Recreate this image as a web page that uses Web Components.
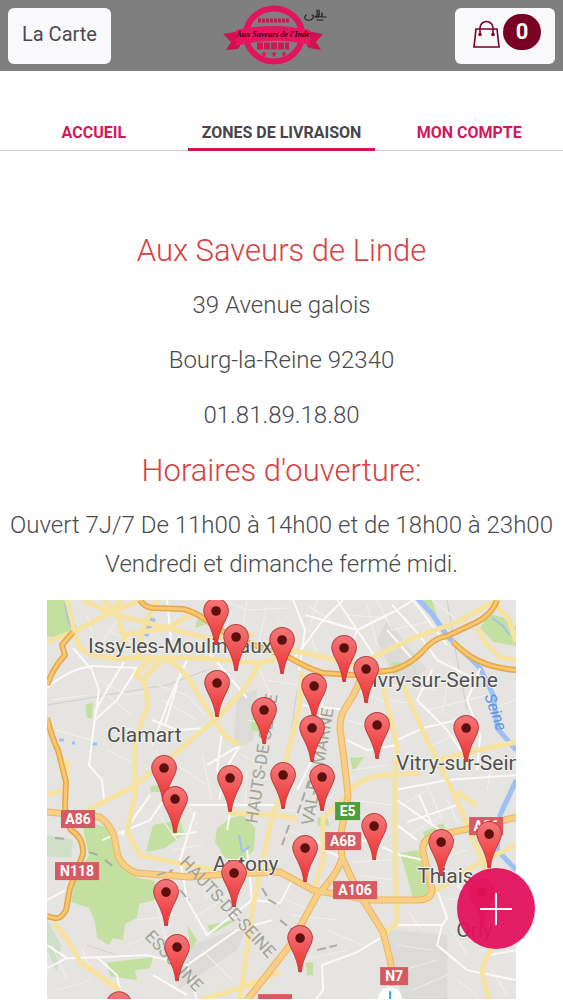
<!DOCTYPE html>
<html lang="fr">
<head>
<meta charset="utf-8">
<meta name="viewport" content="width=device-width, initial-scale=1">
<title>Aux Saveurs de Linde - Zones de livraison</title>
<style>
  body {
    margin: 0;
    background: #fff;
    color: #4a4a4c;
    font-family: Roboto, "Liberation Sans", sans-serif;
  }
</style>
</head>
<body>
<site-header>
  <brand-logo></brand-logo>
</site-header>

<nav-tabs>
  <nav-tab href="#accueil">ACCUEIL</nav-tab>
  <nav-tab href="#zones" active>ZONES DE LIVRAISON</nav-tab>
  <nav-tab href="#compte">MON COMPTE</nav-tab>
</nav-tabs>

<main>
  <shop-info>
    <h2>Aux Saveurs de Linde</h2>
    <p>39 Avenue galois</p>
    <p>Bourg-la-Reine 92340</p>
    <p>01.81.89.18.80</p>
    <h2>Horaires d'ouverture:</h2>
    <p>Ouvert 7J/7 De 11h00 à 14h00 et de 18h00 à 23h00<br>Vendredi et dimanche fermé midi.</p>
    <delivery-map slot="map"></delivery-map>
  </shop-info>
</main>

<add-button></add-button>

<script>
class SiteHeader extends HTMLElement {
  connectedCallback() {
    this.attachShadow({ mode: 'open' });
    this.shadowRoot.innerHTML = `
      <style>
        :host { display: block; }
        header {
          display: grid;
          grid-template-columns: 1fr auto 1fr;
          align-items: center;
          box-sizing: border-box;
          height: 71px;
          padding: 0 8px;
          background: #807f80;
        }
        button {
          display: flex;
          align-items: center;
          height: 56px;
          border: 0;
          border-radius: 6px;
          background: #f9f8fb;
          color: #4a4a4c;
          font: inherit;
          font-size: 20px;
          cursor: pointer;
        }
        .menu { justify-self: start; padding: 0 14px 4px; }
        .cart { justify-self: end; padding: 0 14px 8px 18px; gap: 3px; }
        .count {
          width: 38px;
          border-radius: 18px;
          background: #780024;
          color: #fff;
          font-size: 22px;
          font-weight: 700;
          line-height: 36px;
          text-align: center;
        }
      </style>
      <header>
        <button class="menu" type="button">La Carte</button>
        <slot></slot>
        <button class="cart" type="button" aria-label="Panier">
          <svg width="27" height="36" viewBox="0 -5 27 36" fill="none" stroke="#780024" stroke-width="1.6" aria-hidden="true">
            <path d="M3 10h21l2 18H1z"/>
            <path d="M7 15V9a6.500 6.500 0 0 1 13 0v6"/>
            <circle cx="7" cy="15.500" r="1.800" fill="#780024" stroke="none"/>
            <circle cx="20" cy="15.500" r="1.800" fill="#780024" stroke="none"/>
          </svg>
          <span class="count">0</span>
        </button>
      </header>
    `;
  }
}
customElements.define('site-header', SiteHeader);

class BrandLogo extends HTMLElement {
  connectedCallback() {
    this.attachShadow({ mode: 'open' });
    this.shadowRoot.innerHTML = `
      <style>
        :host { display: block; padding: 0 14px 2px 0; }
        svg { display: block; }
      </style>
      <svg width="104" height="62" viewBox="0 0 104 62" role="img" aria-label="Aux Saveurs de l'Inde">
        <ellipse cx="51" cy="31" rx="28" ry="26.500" fill="none" stroke="#e4135d" stroke-width="6"/>
        <path d="M35 16.500h32" stroke="#c01a55" stroke-width="4" stroke-dasharray="3 1"/>
        <path d="M0 30 17 27v15l-2 3L3 46l5-8zM100 30 84 27v15l2 2 12 2-5-8z" fill="#d0114f"/>
        <path d="M13 26Q50 18 87 26v15Q50 32 13 42z" fill="#e8155f"/>
        <path d="M34 42h32" stroke="#d31455" stroke-width="7" stroke-dasharray="6 1"/>
        <path d="m41 47 1 2 2 0-2 2 1 2-2-1-2 1 1-2-2-2h2zm10 0 1 2h2l-2 2 1 2-2-1-2 1 1-2-2-2h2zm10 0 1 2h2l-2 2 1 2-2-1-2 1 1-2-2-2h2z" fill="#e4135d"/>
        <text x="50" y="33" text-anchor="middle" fill="#2a0614" font-family="Liberation Serif, serif" font-style="italic" font-weight="700" font-size="8">Aux Saveurs de l'Inde</text>
        <path d="M83 11q-3 4 1 5 4 1 6-2 1-3-1-3m3 2q3 0 2-7m-1 7q4 1 3-7m0 7q4 0 3-4m0 4h4m-9 3h6" fill="none" stroke="#1c1c20" stroke-width="1.200" stroke-linecap="round"/>
      </svg>
    `;
  }
}
customElements.define('brand-logo', BrandLogo);

class NavTabs extends HTMLElement {
  connectedCallback() {
    this.attachShadow({ mode: 'open' });
    this.shadowRoot.innerHTML = `
      <style>
        :host { display: block; padding-top: 42px; }
        nav {
          display: grid;
          grid-template-columns: repeat(3, 1fr);
          box-shadow: inset 0 -1px #d5cfd3;
        }
      </style>
      <nav><slot></slot></nav>
    `;
  }
}
customElements.define('nav-tabs', NavTabs);

class NavTab extends HTMLElement {
  connectedCallback() {
    const active = this.hasAttribute('active');
    this.attachShadow({ mode: 'open' });
    this.shadowRoot.innerHTML = `
      <style>
        :host { display: block; }
        a {
          display: block;
          height: 35px;
          border-bottom: 3px solid transparent;
          color: #d3175a;
          font-size: 16px;
          font-weight: 700;
          line-height: 40px;
          text-align: center;
          text-decoration: none;
          white-space: nowrap;
        }
        a.active { border-color: #cb1556; color: #49454a; }
      </style>
      <a href="${this.getAttribute('href')}" class="${active ? 'active' : ''}"><slot></slot></a>
    `;
  }
}
customElements.define('nav-tab', NavTab);

class ShopInfo extends HTMLElement {
  connectedCallback() {
    this.attachShadow({ mode: 'open' });
    this.shadowRoot.innerHTML = `
      <style>
        :host {
          display: block;
          padding-top: 80px;
          text-align: center;
          font-weight: 300;
        }
        ::slotted(h2), ::slotted(p) { margin: 0 0 16px; line-height: 39px; }
        ::slotted(h2) { color: #d9403f; font-size: 31px; font-weight: 300; }
        ::slotted(p) { font-size: 24px; }
        .map {
          display: grid;
          grid-template-columns: 1fr 10fr 1fr;
        }
        .map slot { display: block; grid-column: 2; }
      </style>
      <slot></slot>
      <div class="map"><slot name="map"></slot></div>
    `;
  }
}
customElements.define('shop-info', ShopInfo);

// centre of each pin's head, in map units
const PINS = [
  [169, 11], [235, 40], [189, 37], [297, 48], [319, 69], [170, 83], [267, 86],
  [217, 110], [330, 125], [265, 128], [419, 128], [117, 168], [236, 175],
  [275, 177], [183, 178], [128, 199], [327, 226], [442, 234], [394, 242],
  [258, 248], [187, 273], [435, 292], [119, 292], [253, 338], [130, 347], [72, 404]
];

// x, y, width, label, colour
const SHIELDS = [
  [14, 210, 34, 'A86', '#d65a62'],
  [8, 262, 44, 'N118', '#d65a62'],
  [288, 202, 25, 'E5', '#4f9c3c'],
  [278, 232, 36, 'A6B', '#d65a62'],
  [286, 281, 44, 'A106', '#d65a62'],
  [422, 217, 34, 'A86', '#d65a62'],
  [333, 367, 28, 'N7', '#d65a62']
];

const MOTORWAYS = `
  M26 32 15 45 18 55Q6 68 0 85M0 118Q5 138 11 150L19 182 18 205Q18 223 24 230 37 238 36 254L23 288 19 310Q14 319 8 318L0 316
  M93 0Q97 7 106 8L136 9Q150 12 170 28 190 40 210 46L243 58Q260 68 276 73L306 75 346 70Q362 65 375 52 386 38 400 36L430 22Q445 14 450 0
  M406 42Q420 56 432 61 446 68 469 70`;

const TRUNKS = `
  M0 212 53 217Q63 224 67 236L71 256Q76 268 90 273L143 277 180 274 233 272 266 290 323 300H370Q384 300 385 290L376 252Q374 240 386 236L420 229 469 217
  M316 70Q312 88 300 105 292 116 293 130L297 160 301 195 293 238 295 258Q290 275 270 295L243 345 200 400
  M295 258 311 292 336 332 343 360 347 385`;

const YELLOW = `
  M0 42 26 32 63 13 98-2M20 0 26 25 30 42Q34 52 46 55L70 59 90 58
  M36 0 63 13 120 28 160 38 206 35M56 0 70 15 80 48M110 0 96 28 90 58M63 13 75 0M75 35 120 28 150 12
  M96 79Q85 78 92 70L103 61Q120 57 130 66 142 76 152 96L166 118 178 136 193 145
  M113 62 97 78 101 105 93 125 88 145V195L80 232 93 255 130 263 170 270
  M213 63 195 92 170 118 126 155 86 187 50 205 30 216M90 58H150L213 63 240 56
  M233 48 276 57 310 65 366 38 410 22 446 2M430 28 440 45 452 57 469 60M446 2 462 20 469 42
  M255 72 253 105 240 155 233 200 226 212 206 305 193 400
  M336 88 350 145 348 172M356 85 376 132 406 192 433 255 445 290
  M469 142 423 152 390 160M301 192Q315 178 330 176L373 173
  M348 172V262L350 322 333 338M301 195 276 218V262L266 290M250 218 233 216 180 212
  M386 292 433 262 469 245M450 340Q436 360 435 372L442 400M410 192 430 205
  M6 322Q22 338 33 362L70 388 74 400M153 400 193 388 233 372M0 195 18 190 20 160`;

const STREETS = `
  M26 48 45 70 52 90 47 125 42 165 55 180 57 200M0 88Q20 70 45 66L90 68M90 68 70 100 48 120
  M77 62 60 90 48 112M120 0 124 40M140 60 122 100 105 145M105 120 130 130 160 128M130 85 118 125
  M175 130 170 170 185 200 180 230M193 145 178 170 172 200M103 195 75 235M140 205H227M148 212 133 260 140 300 160 335
  M193 145 160 165M153 42 170 62 200 98M246 0 258 30 252 70M258 15 310 30 350 10 366 0M310 30 330 60M246 60 276 20 296 0
  M290 0 310 30 300 60M340 30 366 60M366 0 400 45M345 5 372 35 390 60 430 80M433 68 420 100 433 135 430 170
  M385 70 370 100 400 130 420 160M350 140 376 128 410 120M300 140 320 150 350 145M276 90 270 150 250 190M253 105 300 110
  M348 190 400 180 469 175M350 200 400 235M372 195 385 225M360 222 410 205M370 240 350 225M297 245 320 240 353 255 376 260
  M350 325H395L400 318 390 290M395 325 390 345 420 370 469 380M333 338 310 352 275 365 276 390 268 400M295 258 278 250 270 240
  M0 368 20 358 50 357 100 355 140 365 190 330 225 320M50 357 70 375 74 395M20 358 0 345M140 365 150 400M160 335 205 300 233 303
  M233 303 245 280M205 300 200 250M106 375 140 395M55 240 103 220 120 195M125 235 150 232M0 300 18 290
  M433 335 430 300 410 285M441 355 469 350M469 310 440 318`;

const LANES = `
  M52 80 80 95 100 92M60 95 85 115M55 130 90 128M60 150 90 165M5 100 40 95M8 130 45 140M110 85 140 95 158 115M115 100 150 120
  M130 15 122 30M70 20 50 50M60 30 85 42M40 15 50 50M185 10 176 35 190 58M200 0 195 30M220 5 210 50M175 0 200 10 240 8
  M260 5 290 25M270 0 262 30 270 55M320 5 330 45M300 15 340 18M330 0 345 30 380 22M385 0 410 20M345 85 390 90M340 100 375 105
  M300 120 335 130M310 90 345 105M380 110 440 95M385 145 420 130M360 150 380 170M400 85 395 115M440 110 469 100M445 160 440 190
  M110 150 115 190M130 165 160 185M135 190 150 225M155 155 165 200M195 155 215 165M200 170 198 205M185 215 210 210M215 180 245 175
  M240 210 270 212M240 230 270 240M305 170 340 165M305 200 345 205M310 215 340 225M355 205 380 190M362 235 395 215M380 185 395 220M400 200 412 225
  M305 262 345 260M310 275 345 280M390 260 420 250M395 270 425 280M400 300 430 295M360 310 375 330M350 345 385 350M355 370 390 360M365 390 400 375
  M405 330 420 355M445 330 469 335M445 370 460 395M410 380 430 395M240 300 262 310M245 315 290 320M255 360 300 350M280 330 315 345
  M5 345 20 380M10 390 45 380M35 350 45 370M80 345 120 330M90 320 130 315M110 305 120 345M155 350 185 380M165 300 195 290M150 315 175 300
  M125 250 155 245M112 215 130 240M150 260 160 300M180 310 220 345M400 60 425 85M230 20 246 35M210 65 230 110M220 80 250 85M200 120 230 125`;

class DeliveryMap extends HTMLElement {
  connectedCallback() {
    const shield = ([x, y, w, label, fill]) => `
      <rect x="${x}" y="${y}" width="${w}" height="18" fill="${fill}"/>
      <text x="${x + w / 2}" y="${y + 14}">${label}</text>`;
    const pin = ([x, y]) => `<use href="#pin" x="${x}" y="${y}"/>`;

    this.attachShadow({ mode: 'open' });
    this.shadowRoot.innerHTML = `
      <style>
        :host { display: block; }
        svg { display: block; width: 100%; height: auto; font-family: Roboto, "Liberation Sans", sans-serif; }
        path { stroke-linejoin: round; }
        .road { fill: none; }
        .town { fill: #50514f; font-size: 21px; font-weight: 400; stroke: #f4f3ef; stroke-width: 2px; paint-order: stroke; }
        .area { fill: #a2a196; font-size: 17px; font-weight: 400; }
        .shield { fill: #fff; font-size: 14px; font-weight: 700; text-anchor: middle; }
        .river { fill: #5c94e2; font-size: 16px; font-style: italic; font-weight: 400; }
      </style>
      <svg viewBox="0 0 469 399" role="img" aria-label="Carte des zones de livraison">
        <defs>
          <linearGradient id="red" x1="0" y1="0" x2="0" y2="1">
            <stop offset="0" stop-color="#f3787a"/>
            <stop offset="1" stop-color="#f0302f"/>
          </linearGradient>
          <g id="pin">
            <path d="M0-12.500a12.300 12.300 0 0 1 12.300 12.500C12.300 8 3 15 1.200 33.500H-1.200C-3 15-12.300 8-12.300 0A12.300 12.300 0 0 1 0-12.500z" fill="url(#red)" stroke="#b93f40"/>
            <circle r="4.800" fill="#5a100d"/>
          </g>
        </defs>
        <rect width="469" height="400" fill="#e5e4e1"/>

        <g fill="#dcdbd8">
          <path d="M190 95 210 90 206 140 186 150zM340 330 400 335 400 400H355zM145 345 200 325 190 350 130 390zM340 20 380 70 350 85 330 40z"/>
        </g>
        <g fill="#c3e0a1">
          <path d="M0 0H18L24 30 12 38 0 36zM38 105 46 102 45 118 40 118zM150 20 160 15 158 25 148 28z"/>
          <path d="M36 228 46 224 60 227 70 245 75 262 90 278 106 280 112 288 108 300 92 304 90 318 78 324 76 340 66 338 62 345 50 338 48 322 42 308 24 302 30 272 42 256z"/>
          <path d="M106 225 133 220 137 234 118 248 99 252zM168 242 170 228 184 218 196 215 208 228 207 250 196 262 178 258z"/>
          <path d="M60 362 80 360 106 357 103 368 88 370 90 380 63 376zM103 187 115 184 113 192 104 192z"/>
          <path d="M353 253 371 250 382 280 380 296 366 298zM433 28 442 14 458 18 469 28V46L446 42z"/>
          <path d="M303 158 317 157 306 172zM317 235 328 245 324 252zM373 0 385 0 390 15 380 12zM270 218 280 217 282 226 271 226z"/>
          <path d="M140 325 150 340 144 350zM160 325 190 320 164 334zM259 362 266 362 266 375 260 375zM376 232 396 223 398 228 378 240zM343 63 355 62 350 75zM205 118 214 114 212 132 204 130z"/>
        </g>
        <path d="M0 235 26 240 24 258 0 256zM0 320 14 345 10 372 0 350z" fill="#cfdfc8"/>
        <g class="road" stroke="#9dc1f3">
          <path d="M370-2 385 14 400 36 433 68 446 95 450 128 462 142 469 150M469 180 453 215 450 250 469 270" stroke-width="5"/>
          <path d="M20 3 24 22 29 32M106 18 98 36" stroke-width="6"/>
          <path d="M192 235 195 252 203 246M445 18 456 26 462 35" stroke-width="2"/>
          <path d="M12 140h5M25 143h3M44 144h6" stroke-width="3"/>
        </g>

        <path class="road" d="M0 105 60 95 120 85 160 70M40 345 70 355M400 0 410 60 420 110M250 90 240 160" stroke="#cfcecb"/>
        <path class="road" d="${LANES}" stroke="#f1f0ed"/>
        <path class="road" d="${STREETS}" stroke="#fbfaf8" stroke-width="2"/>
        <path class="road" d="${YELLOW}" stroke="#f8e2a0" stroke-width="5"/>
        <path class="road" d="${TRUNKS}" stroke="#ecb560" stroke-width="7"/>
        <path class="road" d="${TRUNKS}" stroke="#f9cf85" stroke-width="5"/>
        <path class="road" d="${MOTORWAYS}" stroke="#e5a74c" stroke-width="6"/>
        <path class="road" d="${MOTORWAYS}" stroke="#fbc76c" stroke-width="3"/>
        <path class="road" d="M8 238 20 239M42 252 52 255M58 260 68 268M110 275 126 270M133 290 142 300M233 320 248 332M250 335 262 345M270 350 290 345M215 288 222 300 233 306M242 225 235 245M262 180 250 215" stroke="#aaaaa8" stroke-width="2" stroke-dasharray="9 4"/>

        <g class="area">
          <text transform="translate(210 224) rotate(-81)">HAUTS-DE-SEINE</text>
          <text transform="translate(266 226) rotate(-80)">VAL-DE-MARNE</text>
          <text transform="translate(132 263) rotate(47)">HAUTS-DE-SEINE</text>
          <text transform="translate(97 337) rotate(47)">ESSONNE</text>
        </g>
        <text class="river" transform="translate(437 96) rotate(70)">Seine</text>
        <g class="town">
          <text x="41" y="53">Issy-les-Moulineaux</text>
          <text x="325" y="87">Ivry-sur-Seine</text>
          <text x="60" y="142">Clamart</text>
          <text x="349" y="170">Vitry-sur-Seine</text>
          <text x="166" y="271">Antony</text>
          <text x="370" y="283">Thiais</text>
          <text x="409" y="337">Orly</text>
        </g>
        <g class="shield">${SHIELDS.map(shield).join('')}</g>
        <rect x="211" y="394" width="34" height="18" fill="#d65a62"/>
        <circle cx="343" cy="399" r="12" fill="#fff"/>
        <path d="M343 391v9m-5 0h10" stroke="#39a0d8" stroke-width="2"/>
        ${PINS.map(pin).join('')}
      </svg>
    `;
  }
}
customElements.define('delivery-map', DeliveryMap);

class AddButton extends HTMLElement {
  connectedCallback() {
    this.attachShadow({ mode: 'open' });
    this.shadowRoot.innerHTML = `
      <style>
        :host {
          position: fixed;
          right: 28px;
          bottom: 51px;
        }
        button {
          display: grid;
          place-items: center;
          width: 78px;
          height: 81px;
          padding: 0;
          border: 0;
          border-radius: 50%;
          background: rgba(226, 18, 92, 0.95);
          cursor: pointer;
        }
      </style>
      <button type="button" aria-label="Ajouter">
        <svg width="32" height="34" viewBox="0 0 32 34" stroke="#fff" stroke-width="2">
          <path d="M16 1v32M0 17h32"/>
        </svg>
      </button>
    `;
  }
}
customElements.define('add-button', AddButton);
</script>
</body>
</html>
